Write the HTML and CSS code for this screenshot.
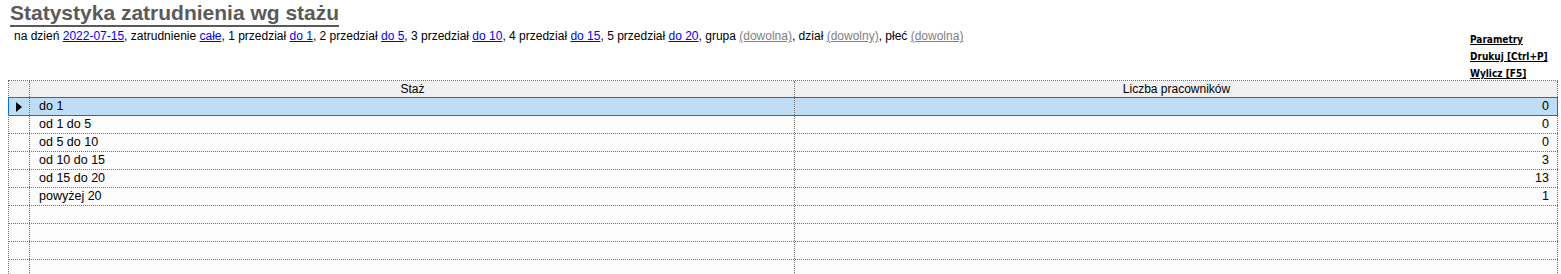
FILE: index.html
```html
<!DOCTYPE html>
<html lang="pl">
<head>
  <meta charset="UTF-8" />
  <title>Statystyka zatrudnienia wg stażu</title>
  <link rel="stylesheet" href="styles.css">
</head>
<body>
  <div class="top">
    <div class="heading">
      <h1>Statystyka zatrudnienia wg stażu</h1>
      <p class="params">
        na dzień <a href="#">2022-07-15</a>, zatrudnienie <a href="#">całe</a>,
        1 przedział <a href="#">do 1</a>, 2 przedział <a href="#">do 5</a>,
        3 przedział <a href="#">do 10</a>, 4 przedział <a href="#">do 15</a>,
        5 przedział <a href="#">do 20</a>, grupa <a class="any" href="#">(dowolna)</a>,
        dział <a class="any" href="#">(dowolny)</a>, płeć <a class="any" href="#">(dowolna)</a>
      </p>
    </div>
    <!-- akcje raportu -->
    <div class="actions">
      <a href="#">Parametry</a>
      <a href="#">Drukuj [Ctrl+P]</a>
      <a href="#">Wylicz [F5]</a>
    </div>
  </div>

  <div class="grid">
    <div class="row head">
      <div class="cell mark"></div>
      <div class="cell">Staż</div>
      <div class="cell">Liczba pracowników</div>
    </div>
    <div class="row current">
      <div class="cell mark"><span class="arrow"></span></div>
      <div class="cell">do 1</div>
      <div class="cell num">0</div>
    </div>
    <div class="row">
      <div class="cell mark"></div>
      <div class="cell">od 1 do 5</div>
      <div class="cell num">0</div>
    </div>
    <div class="row">
      <div class="cell mark"></div>
      <div class="cell">od 5 do 10</div>
      <div class="cell num">0</div>
    </div>
    <div class="row">
      <div class="cell mark"></div>
      <div class="cell">od 10 do 15</div>
      <div class="cell num">3</div>
    </div>
    <div class="row">
      <div class="cell mark"></div>
      <div class="cell">od 15 do 20</div>
      <div class="cell num">13</div>
    </div>
    <div class="row">
      <div class="cell mark"></div>
      <div class="cell">powyżej 20</div>
      <div class="cell num">1</div>
    </div>
    <div class="row"><div class="cell mark"></div><div class="cell"></div><div class="cell num"></div></div>
    <div class="row"><div class="cell mark"></div><div class="cell"></div><div class="cell num"></div></div>
    <div class="row"><div class="cell mark"></div><div class="cell"></div><div class="cell num"></div></div>
    <div class="row"><div class="cell mark"></div><div class="cell"></div><div class="cell num"></div></div>
  </div>
</body>
</html>
```

FILE: styles.css
```css
body {
  margin: 0;
  padding: 0 3px 0 8px;
  background: #fff;
  font-family: "Liberation Sans", Arial, sans-serif;
  font-size: 12px;
  color: #000;
}

/* nagłówek raportu */
.top {
  display: flex;
  justify-content: space-between;
  height: 80px;
}
h1 {
  display: inline-block;
  margin: 2px 0 0 2px;
  font-size: 21px;
  line-height: 22px;
  font-weight: bold;
  color: #5a5a5a;
  border-bottom: 2px solid #5a5a5a;
  padding-bottom: 1px;
}
.params {
  margin: 2px 0 0 6px;
  line-height: 14px;
}
.params a {
  color: #0000ff;
}
.params a.any {
  color: #808080;
}

/* linki po prawej */
.actions {
  display: flex;
  flex-direction: column;
  width: 88px;
  padding-top: 31px;
}
.actions a {
  font-family: "DejaVu Sans Condensed", "DejaVu Sans", sans-serif;
  font-size: 10px;
  font-weight: bold;
  line-height: 17px;
  color: #000;
}

/* siatka danych */
.grid {
  width: 1549px;
  border-top: 1px dotted #707070;
  border-left: 1px dotted #707070;
  background: #fcfcfc;
}
.row {
  display: grid;
  grid-template-columns: 21px 765px 763px;
  height: 18px;
  border-bottom: 1px dotted #707070;
  box-sizing: border-box;
}
.cell {
  border-right: 1px dotted #707070;
  padding: 0 8px 0 9px;
  font-size: 12.5px;
  line-height: 17px;
  white-space: nowrap;
  overflow: hidden;
}
.cell.mark {
  padding: 0;
  display: flex;
  align-items: center;
}
.cell.num {
  text-align: right;
}
.row.head {
  height: 17px;
  background: #f0f0f0;
}
.row.head .cell {
  text-align: center;
  font-size: 12px;
  line-height: 16px;
}
.row.current {
  position: relative;
  background: #bfddf5;
}
.row.current::after {
  content: "";
  position: absolute;
  top: -1px;
  bottom: -1px;
  left: -1px;
  right: 0;
  border: 1px solid #0078d7;
  pointer-events: none;
}
.arrow {
  margin-left: 7px;
  width: 0;
  height: 0;
  border-top: 5px solid transparent;
  border-bottom: 5px solid transparent;
  border-left: 6px solid #000;
}
```
